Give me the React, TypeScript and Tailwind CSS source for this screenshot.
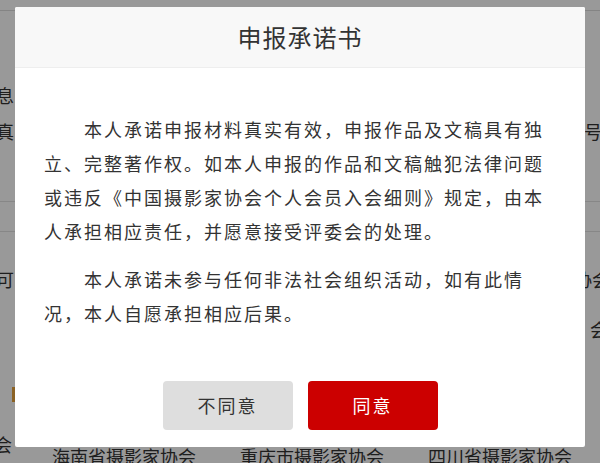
import React from "react";

const font = { fontFamily: '"Noto Sans CJK SC", "Noto Sans", sans-serif' };

function BackgroundPage() {
    return (
        <div className="flex flex-col bg-white text-[#333] text-[18px] leading-[24px]">
            <div className="h-[11px] border-b border-[#ddd]" />
            <div className="mt-[72px] flex justify-between">
                <span className="-ml-[4px]">息</span>
            </div>
            <div className="mt-[12px] flex justify-between">
                <span className="-ml-[4px]">真</span>
                <span className="-mr-[2px]">号</span>
            </div>
            <div className="mt-[58px] border-b border-[#e2e2e2]" />
            <div className="mt-[29px] border-b border-[#e2e2e2]" />
            <div className="mt-[35px] flex justify-between">
                <span className="-ml-[4px]">可：</span>
                <span className="-mr-[10px]">协会</span>
            </div>
            <div className="mt-[26px] flex justify-end">
                <span className="-mr-[8px]">会</span>
            </div>
            <div className="mt-[46px] flex">
                <span className="ml-[12px] w-[3px] h-[15px] bg-[#e8a33d]" />
            </div>
            <div className="mt-[30px] flex">
                <span className="-ml-[6px]">会</span>
            </div>
            <div className="mt-[-12px] flex gap-[44px] pl-[52px] whitespace-nowrap">
                <span>海南省摄影家协会</span>
                <span>重庆市摄影家协会</span>
                <span>四川省摄影家协会</span>
            </div>
        </div>
    );
}

export default function App() {
    return (
        <div className="relative w-[600px] h-[463px] overflow-hidden" style={font}>
            <BackgroundPage />

            <div className="absolute inset-0 bg-black/40 flex justify-center pt-[7px]">
                <div className="w-[570px] h-[440px] bg-white rounded-[2px] flex flex-col overflow-hidden">
                    <div className="h-[61px] bg-[#f8f8f8] border-b border-[#eee] flex items-center justify-center">
                        <h2 className="text-[24px] text-[#333] tracking-[1px]">申报承诺书</h2>
                    </div>

                    <div className="flex-1 px-[29px] pt-[44px] text-[18px] leading-[34px] tracking-[2px] text-[#333]">
                        <p className="indent-[40px]">
                            本人承诺申报材料真实有效，申报作品及文稿具有独立、完整著作权。如本人申报的作品和文稿触犯法律问题或违反《中国摄影家协会个人会员入会细则》规定，由本人承担相应责任，并愿意接受评委会的处理。
                        </p>
                        <p className="indent-[40px] mt-[14px]">
                            本人承诺未参与任何非法社会组织活动，如有此情况，本人自愿承担相应后果。
                        </p>
                    </div>

                    <div className="flex justify-center gap-[15px] pb-[17px]">
                        <button className="w-[130px] h-[49px] rounded-[4px] bg-[#dedede] text-[#333] text-[18px] tracking-[2px]">
                            不同意
                        </button>
                        <button className="w-[130px] h-[49px] rounded-[4px] bg-[#cc0000] text-white text-[18px] tracking-[2px]">
                            同意
                        </button>
                    </div>
                </div>
            </div>
        </div>
    );
}
